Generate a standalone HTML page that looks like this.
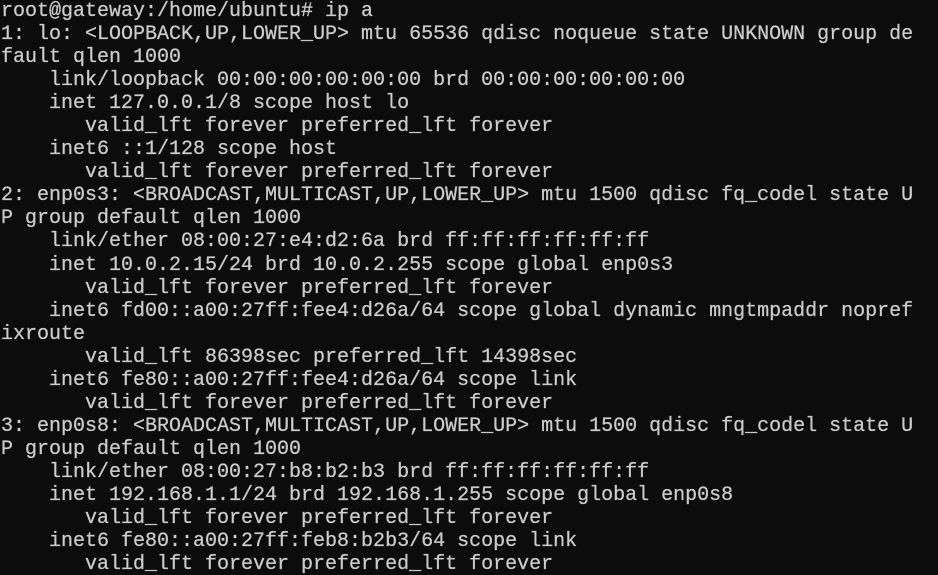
<!DOCTYPE html>
<html><head><meta charset="utf-8"><style>
html,body{margin:0;padding:0;background:#0c0c0c;width:938px;height:575px;overflow:hidden}
pre{margin:0;padding:0 0 0 1px;position:relative;top:0px;font-family:"Liberation Mono","DejaVu Sans Mono",monospace;font-size:20px;line-height:23.05px;color:#cccccc;white-space:pre;-webkit-text-stroke:0.25px #cccccc}
</style></head><body><pre>root@gateway:/home/ubuntu# ip a
1: lo: &lt;LOOPBACK,UP,LOWER_UP&gt; mtu 65536 qdisc noqueue state UNKNOWN group de
fault qlen 1000
    link/loopback 00:00:00:00:00:00 brd 00:00:00:00:00:00
    inet 127.0.0.1/8 scope host lo
       valid_lft forever preferred_lft forever
    inet6 ::1/128 scope host
       valid_lft forever preferred_lft forever
2: enp0s3: &lt;BROADCAST,MULTICAST,UP,LOWER_UP&gt; mtu 1500 qdisc fq_codel state U
P group default qlen 1000
    link/ether 08:00:27:e4:d2:6a brd ff:ff:ff:ff:ff:ff
    inet 10.0.2.15/24 brd 10.0.2.255 scope global enp0s3
       valid_lft forever preferred_lft forever
    inet6 fd00::a00:27ff:fee4:d26a/64 scope global dynamic mngtmpaddr nopref
ixroute
       valid_lft 86398sec preferred_lft 14398sec
    inet6 fe80::a00:27ff:fee4:d26a/64 scope link
       valid_lft forever preferred_lft forever
3: enp0s8: &lt;BROADCAST,MULTICAST,UP,LOWER_UP&gt; mtu 1500 qdisc fq_codel state U
P group default qlen 1000
    link/ether 08:00:27:b8:b2:b3 brd ff:ff:ff:ff:ff:ff
    inet 192.168.1.1/24 brd 192.168.1.255 scope global enp0s8
       valid_lft forever preferred_lft forever
    inet6 fe80::a00:27ff:feb8:b2b3/64 scope link
       valid_lft forever preferred_lft forever</pre></body></html>
